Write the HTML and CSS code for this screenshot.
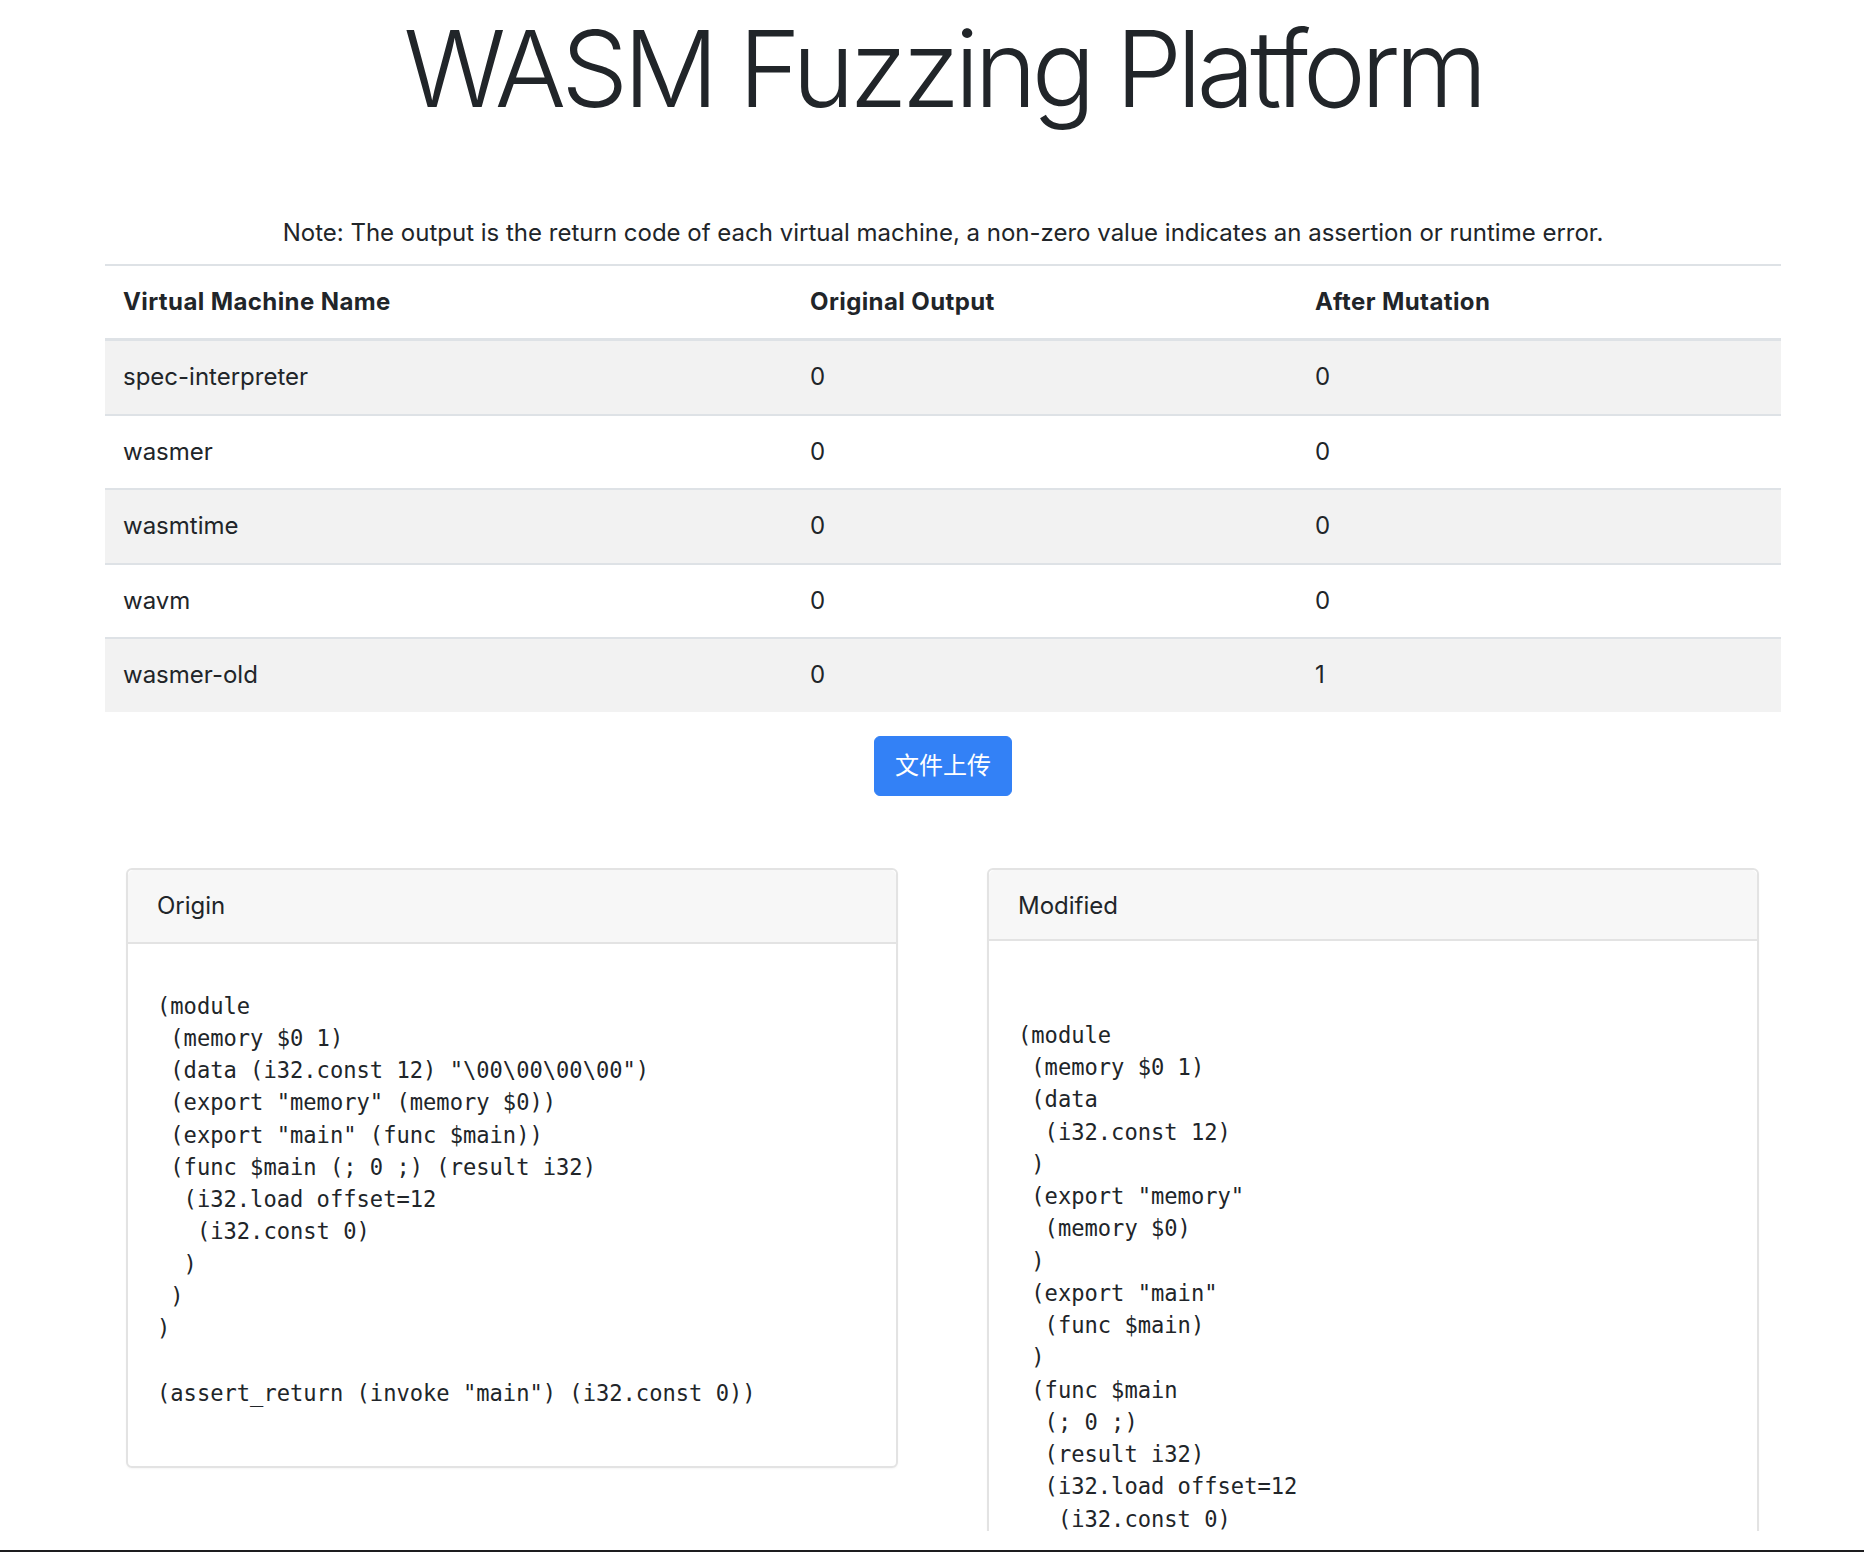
FILE: index.html
```html
<!DOCTYPE html>
<html lang="en">
<head>
<meta charset="utf-8">
<title>WASM Fuzzing Platform</title>
<link rel="stylesheet" href="styles.css">
</head>
<body>
<div class="viewport">
  <main class="container">
    <h1 class="title">WASM Fuzzing Platform</h1>
    <p class="note">Note: The output is the return code of each virtual machine, a non-zero value indicates an assertion or runtime error.</p>
    <table class="results">
      <colgroup>
        <col class="col-name">
        <col class="col-orig">
        <col class="col-after">
      </colgroup>
      <thead>
        <tr><th>Virtual Machine Name</th><th>Original Output</th><th>After Mutation</th></tr>
      </thead>
      <tbody>
        <tr><td>spec-interpreter</td><td>0</td><td>0</td></tr>
        <tr><td>wasmer</td><td>0</td><td>0</td></tr>
        <tr><td>wasmtime</td><td>0</td><td>0</td></tr>
        <tr><td>wavm</td><td>0</td><td>0</td></tr>
        <tr><td>wasmer-old</td><td>0</td><td>1</td></tr>
      </tbody>
    </table>
    <div class="upload-row">
      <button class="btn-upload" type="button">文件上传</button>
    </div>
    <div class="cards">
      <section class="card">
        <div class="card-header">Origin</div>
        <div class="card-body">
<pre class="code code-origin">
(module
 (memory $0 1)
 (data (i32.const 12) "\00\00\00\00")
 (export "memory" (memory $0))
 (export "main" (func $main))
 (func $main (; 0 ;) (result i32)
  (i32.load offset=12
   (i32.const 0)
  )
 )
)

(assert_return (invoke "main") (i32.const 0))</pre>
        </div>
      </section>
      <section class="card">
        <div class="card-header card-header-short">Modified</div>
        <div class="card-body">
<pre class="code">

(module
 (memory $0 1)
 (data
  (i32.const 12)
 )
 (export "memory"
  (memory $0)
 )
 (export "main"
  (func $main)
 )
 (func $main
  (; 0 ;)
  (result i32)
  (i32.load offset=12
   (i32.const 0)
  )
 )
)

(assert_return (invoke "main") (i32.const 0))</pre>
        </div>
      </section>
    </div>
  </main>
</div>
<div class="bottom-gap"></div>
<div class="bottom-bar"></div>
</body>
</html>
```
FILE: styles.css
```css
html, body {
  margin: 0;
  padding: 0;
  background: #ffffff;
}

body {
  font-family: Inter, "Noto Sans CJK SC", sans-serif;
  color: #212529;
  font-size: 24px;
  line-height: 36px;
}

.viewport {
  height: 1531px;
  overflow: hidden;
}

.container {
  margin-left: 105px;
  width: 1676px;
}

.title {
  margin: 0;
  font-size: 106px;
  line-height: 137px;
  font-weight: 300;
  letter-spacing: -5px;
  text-align: center;
  color: #212529;
}

.note {
  margin: 78px 0 13px;
  text-align: center;
  line-height: 36px;
}

.results {
  width: 100%;
  table-layout: fixed;
  border-collapse: collapse;
}

.col-name { width: 687px; }
.col-orig { width: 505px; }
.col-after { width: 484px; }

.results th,
.results td {
  text-align: left;
  padding: 18px 18px 18.5px;
  line-height: 36px;
  border-top: 2px solid #dee2e6;
}

.results th {
  font-weight: 700;
  letter-spacing: 0.4px;
  padding-bottom: 18px;
  border-bottom: 3px solid #dee2e6;
}

.results tbody tr:nth-child(odd) {
  background: #f2f2f2;
}

.upload-row {
  display: flex;
  justify-content: center;
  margin-top: 24.5px;
}

.btn-upload {
  font-family: Inter, "Noto Sans CJK SC", sans-serif;
  font-size: 24px;
  line-height: 36px;
  padding: 11px 20px;
  color: #ffffff;
  background: #3381f6;
  border: 1px solid #3381f6;
  border-radius: 6px;
}

.cards {
  display: grid;
  grid-template-columns: 1fr 1fr;
  gap: 89px;
  margin: 72px 22px 0 21px;
  align-items: start;
}

.card {
  border: 2px solid #e3e3e3;
  border-radius: 6px;
  background: #ffffff;
  box-shadow: 0 1px 2px rgba(0, 0, 0, 0.04);
}

.card-header {
  background: #f7f7f7;
  padding: 18px 29px;
  line-height: 36px;
  border-bottom: 2px solid #e3e3e3;
  border-radius: 6px 6px 0 0;
}

.card-header-short {
  padding-bottom: 15px;
}

.card-body {
  padding: 30px 29px;
}

.code {
  margin: 15.5px 0 27px;
  font-family: "DejaVu Sans Mono", monospace;
  font-size: 22.1px;
  line-height: 32.26px;
  color: #212529;
}

.bottom-gap {
  height: 19px;
}

.bottom-bar {
  height: 2px;
  background: #1d1d1f;
}
```
